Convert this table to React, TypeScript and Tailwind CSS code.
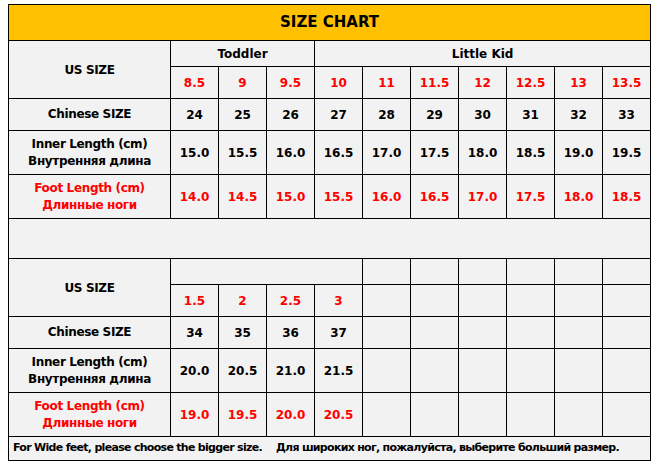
const font = { fontFamily: '"DejaVu Sans", Verdana, sans-serif' };

const cell = 'border border-black text-center align-middle font-bold p-0';

type Row = { label: string[]; red?: boolean; values: string[]; h: string };

function DataRow({ label, red, values, h }: Row) {
  return (
    <tr className={h}>
      <td className={`${cell} text-[12px] leading-[17px] tracking-[-0.35px] ${red ? 'text-[#f00]' : 'text-black'}`}>
        {label.map((l) => (
          <div key={l}>{l}</div>
        ))}
      </td>
      {values.map((v, i) => (
        <td key={i} className={`${cell} text-[12px] ${red ? 'text-[#f00]' : 'text-black'}`}>
          {v}
        </td>
      ))}
    </tr>
  );
}

const pad = (vals: string[]) => [...vals, ...Array(10 - vals.length).fill('')];

export default function App() {
  return (
    <div className="w-[656px] h-[466px] bg-white pt-[4px] pl-[8px]" style={font}>
      <table className="w-[642px] border-collapse table-fixed bg-[#f2f2f2] border border-black">
        <colgroup>
          <col className="w-[162px]" />
          {Array.from({ length: 10 }).map((_, i) => (
            <col key={i} className="w-[48px]" />
          ))}
        </colgroup>
        <tbody>
          <tr className="h-[36px]">
            <td colSpan={11} className={`${cell} bg-[#ffc000] text-[15px] text-black`}>
              SIZE CHART
            </td>
          </tr>

          {/* first block */}
          <tr className="h-[26px]">
            <td rowSpan={2} className={`${cell} text-[12px] tracking-[-0.35px] text-black`}>US SIZE</td>
            <td colSpan={3} className={`${cell} text-[12px] text-black`}>Toddler</td>
            <td colSpan={7} className={`${cell} text-[12px] text-black`}>Little Kid</td>
          </tr>
          <tr className="h-[32px]">
            {['8.5', '9', '9.5', '10', '11', '11.5', '12', '12.5', '13', '13.5'].map((s) => (
              <td key={s} className={`${cell} text-[12px] text-[#f00]`}>{s}</td>
            ))}
          </tr>
          <DataRow h="h-[32px]" label={['Chinese SIZE']} values={['24', '25', '26', '27', '28', '29', '30', '31', '32', '33']} />
          <DataRow
            h="h-[44px]"
            label={['Inner Length (cm)', 'Внутренняя длина']}
            values={['15.0', '15.5', '16.0', '16.5', '17.0', '17.5', '18.0', '18.5', '19.0', '19.5']}
          />
          <DataRow
            h="h-[44px]"
            red
            label={['Foot Length (cm)', 'Длинные ноги']}
            values={['14.0', '14.5', '15.0', '15.5', '16.0', '16.5', '17.0', '17.5', '18.0', '18.5']}
          />

          <tr className="h-[40px]">
            <td colSpan={11} className={cell}></td>
          </tr>

          {/* second block */}
          <tr className="h-[26px]">
            <td rowSpan={2} className={`${cell} text-[12px] tracking-[-0.35px] text-black`}>US SIZE</td>
            <td colSpan={4} className={cell}></td>
            {Array.from({ length: 6 }).map((_, i) => (
              <td key={i} className={cell}></td>
            ))}
          </tr>
          <tr className="h-[32px]">
            {pad(['1.5', '2', '2.5', '3']).map((s, i) => (
              <td key={i} className={`${cell} text-[12px] text-[#f00]`}>{s}</td>
            ))}
          </tr>
          <DataRow h="h-[32px]" label={['Chinese SIZE']} values={pad(['34', '35', '36', '37'])} />
          <DataRow
            h="h-[44px]"
            label={['Inner Length (cm)', 'Внутренняя длина']}
            values={pad(['20.0', '20.5', '21.0', '21.5'])}
          />
          <DataRow
            h="h-[44px]"
            red
            label={['Foot Length (cm)', 'Длинные ноги']}
            values={pad(['19.0', '19.5', '20.0', '20.5'])}
          />

          <tr className="h-[24px]">
            <td colSpan={11} className="border border-black p-0 pl-[4px] text-left align-middle font-bold text-[11px] tracking-[-0.7px] text-black whitespace-nowrap">
              For Wide feet, please choose the bigger size.
              <span className="ml-[14px]">Для широких ног, пожалуйста, выберите больший размер.</span>
            </td>
          </tr>
        </tbody>
      </table>
    </div>
  );
}
